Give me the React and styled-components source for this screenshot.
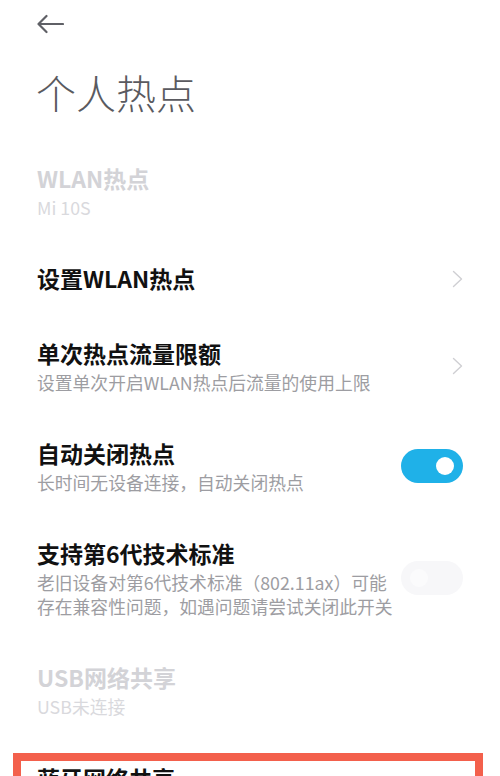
import React from "react";
import styled, { createGlobalStyle } from "styled-components";

const Global = createGlobalStyle`
  html, body { margin: 0; padding: 0; background: #fff; }
  body {
    font-family: "Noto Sans CJK SC", "Noto Sans", sans-serif;
    -webkit-font-smoothing: antialiased;
    overflow: hidden;
  }
`;

const Page = styled.div`
  width: 500px;
  min-height: 776px;
  background: #fff;
  display: flex;
  flex-direction: column;
`;

const TopBar = styled.div`
  height: 48px;
  display: flex;
  align-items: center;
  padding-left: 36px;
`;

const BackButton = styled.button`
  border: 0;
  background: none;
  padding: 0;
  display: flex;
  align-items: center;
  cursor: pointer;
`;

const PageTitle = styled.h1`
  margin: 16px 0 0;
  padding-left: 36px;
  font-size: 40px;
  line-height: 56px;
  font-weight: 300;
  color: #5a5a60;
`;

const List = styled.div`
  margin-top: 21px;
  display: flex;
  flex-direction: column;
`;

const Item = styled.div`
  display: flex;
  align-items: center;
  justify-content: space-between;
  padding: 22px 37px 22px 37px;
`;

const Texts = styled.div`
  display: flex;
  flex-direction: column;
  min-width: 0;
`;

const Title = styled.div`
  font-size: 23px;
  line-height: 31px;
  font-weight: 700;
  color: ${(p) => (p.$disabled ? "#d3d3d7" : "#111")};
`;

const Sub = styled.div`
  font-size: 17.8px;
  line-height: 24px;
  margin-top: 1px;
  color: ${(p) => (p.$disabled ? "#d9d9dd" : "#9d9da2")};
  white-space: nowrap;
`;

const Chevron = styled.svg`
  flex: none;
  width: 11px;
  height: 18px;
  margin-left: 16px;
`;

const Toggle = styled.div`
  flex: none;
  width: 62px;
  height: 34px;
  border-radius: 17px;
  background: ${(p) => (p.$on ? "#1fb1e8" : "#f7f7f9")};
  display: flex;
  align-items: center;
  justify-content: ${(p) => (p.$on ? "flex-end" : "flex-start")};
  padding: 0 9px;
  box-sizing: border-box;
  margin-left: 16px;
`;

const Knob = styled.div`
  width: 18px;
  height: 18px;
  border-radius: 50%;
  background: ${(p) => (p.$on ? "#fff" : "#fbfbfc")};
`;

const Highlight = styled.div`
  margin: 13px 17px 0 13px;
  border: 8px solid #f3604c;
  border-bottom: 0;
  padding: 2px 16px 40px 16px;
`;

const ArrowIcon = () => (
  <svg width="28" height="20" viewBox="0 0 28 20" fill="none">
    <path
      d="M27 10H2.5M10.5 2L2.5 10l8 8"
      stroke="#5f6066"
      strokeWidth="2.2"
      strokeLinecap="round"
      strokeLinejoin="round"
    />
  </svg>
);

const ChevronIcon = () => (
  <Chevron viewBox="0 0 11 18" fill="none">
    <path d="M1.5 1.5L9.5 9l-8 7.5" stroke="#cfcfd3" strokeWidth="1.4" strokeLinecap="round" strokeLinejoin="round" />
  </Chevron>
);

const Row = ({ title, sub, disabled, right }) => (
  <Item>
    <Texts>
      <Title $disabled={disabled}>{title}</Title>
      {sub && <Sub $disabled={disabled}>{sub}</Sub>}
    </Texts>
    {right}
  </Item>
);

export default function App() {
  return (
    <Page>
      <Global />
      <TopBar>
        <BackButton aria-label="返回">
          <ArrowIcon />
        </BackButton>
      </TopBar>
      <PageTitle>个人热点</PageTitle>
      <List>
        <Row title="WLAN热点" sub="Mi 10S" disabled />
        <Row title="设置WLAN热点" right={<ChevronIcon />} />
        <Row
          title="单次热点流量限额"
          sub="设置单次开启WLAN热点后流量的使用上限"
          right={<ChevronIcon />}
        />
        <Row
          title="自动关闭热点"
          sub="长时间无设备连接，自动关闭热点"
          right={
            <Toggle $on>
              <Knob $on />
            </Toggle>
          }
        />
        <Row
          title="支持第6代技术标准"
          sub={
            <>
              老旧设备对第6代技术标准（802.11ax）可能
              <br />
              存在兼容性问题，如遇问题请尝试关闭此开关
            </>
          }
          right={
            <Toggle>
              <Knob />
            </Toggle>
          }
        />
        <Row title="USB网络共享" sub="USB未连接" disabled />
        <Highlight>
          <Title>蓝牙网络共享</Title>
        </Highlight>
      </List>
    </Page>
  );
}
